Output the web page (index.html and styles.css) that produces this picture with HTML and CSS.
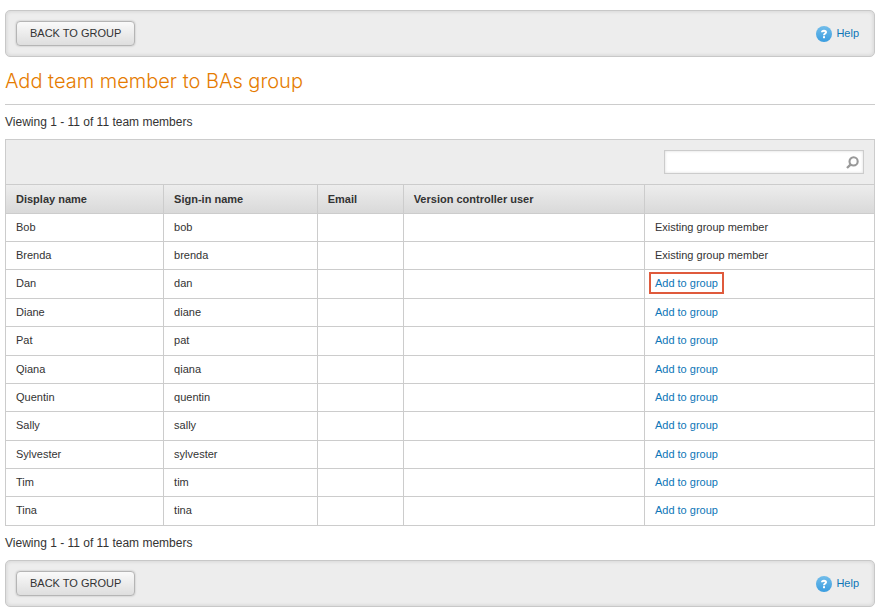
FILE: index.html
```html
<!DOCTYPE html>
<html lang="en">
<head>
<meta charset="utf-8">
<meta name="viewport" content="width=device-width, initial-scale=1">
<title>Add team member to BAs group</title>
<link rel="stylesheet" href="styles.css">
</head>
<body>
<svg class="defs" aria-hidden="true">
  <defs>
    <linearGradient id="help-fill" x1="0" y1="0" x2="0" y2="1">
      <stop offset="0" stop-color="#72bdea"/>
      <stop offset="1" stop-color="#3a9de0"/>
    </linearGradient>
    <symbol id="help-icon" viewBox="0 0 16 16">
      <circle cx="8" cy="8" r="8" fill="url(#help-fill)"/>
      <path d="M6 6.2C6 4.2 10 4.2 10 6.2C10 7.6 8 7.4 8 9.3" fill="none" stroke="#fff" stroke-width="2"/>
      <rect x="7" y="10.2" width="2" height="2" fill="#fff"/>
    </symbol>
  </defs>
</svg>

<nav class="toolbar" aria-label="Top actions">
  <button class="button" type="button">BACK TO GROUP</button>
  <a class="help" href="#help"><svg class="help-icon" aria-hidden="true"><use href="#help-icon"/></svg><span class="help-label">Help</span></a>
</nav>

<main>
  <h1 class="title">Add team member to BAs group</h1>
  <p class="summary">Viewing 1 - 11 of 11 team members</p>

  <section class="members">
    <form class="filter">
      <div class="search">
        <input class="search-input" type="text" aria-label="Search team members">
        <button class="search-button" type="button" aria-label="Search">
          <svg class="search-icon" viewBox="0 0 13 13" aria-hidden="true">
            <circle cx="7.6" cy="5.4" r="4.1" fill="none" stroke="#999" stroke-width="2.1"/>
            <path d="M4.8 8.4L1 12" stroke="#999" stroke-width="2.4"/>
          </svg>
        </button>
      </div>
    </form>
    <table class="table">
      <colgroup>
        <col class="col-name"><col class="col-signin"><col class="col-email"><col class="col-version"><col class="col-action">
      </colgroup>
      <thead>
        <tr><th scope="col">Display name</th><th scope="col">Sign-in name</th><th scope="col">Email</th><th scope="col">Version controller user</th><td></td></tr>
      </thead>
      <tbody>
        <tr><td>Bob</td><td>bob</td><td></td><td></td><td>Existing group member</td></tr>
        <tr><td>Brenda</td><td>brenda</td><td></td><td></td><td>Existing group member</td></tr>
        <tr><td>Dan</td><td>dan</td><td></td><td></td><td><a class="add highlighted" href="#dan">Add to group</a></td></tr>
        <tr><td>Diane</td><td>diane</td><td></td><td></td><td><a class="add" href="#diane">Add to group</a></td></tr>
        <tr><td>Pat</td><td>pat</td><td></td><td></td><td><a class="add" href="#pat">Add to group</a></td></tr>
        <tr><td>Qiana</td><td>qiana</td><td></td><td></td><td><a class="add" href="#qiana">Add to group</a></td></tr>
        <tr><td>Quentin</td><td>quentin</td><td></td><td></td><td><a class="add" href="#quentin">Add to group</a></td></tr>
        <tr><td>Sally</td><td>sally</td><td></td><td></td><td><a class="add" href="#sally">Add to group</a></td></tr>
        <tr><td>Sylvester</td><td>sylvester</td><td></td><td></td><td><a class="add" href="#sylvester">Add to group</a></td></tr>
        <tr><td>Tim</td><td>tim</td><td></td><td></td><td><a class="add" href="#tim">Add to group</a></td></tr>
        <tr><td>Tina</td><td>tina</td><td></td><td></td><td><a class="add" href="#tina">Add to group</a></td></tr>
      </tbody>
    </table>
  </section>

  <p class="summary">Viewing 1 - 11 of 11 team members</p>
</main>

<nav class="toolbar" aria-label="Bottom actions">
  <button class="button" type="button">BACK TO GROUP</button>
  <a class="help" href="#help"><svg class="help-icon" aria-hidden="true"><use href="#help-icon"/></svg><span class="help-label">Help</span></a>
</nav>
</body>
</html>
```
FILE: styles.css
```css
* {
  box-sizing: border-box;
}

body {
  margin: 0;
  padding: 10px 4px 6px 5px;
  background: #fff;
  color: #333;
  font-family: "Liberation Sans", Arial, sans-serif;
  font-size: 11px;
}

a {
  color: #0e76b7;
  text-decoration: none;
}

.defs {
  position: absolute;
  width: 0;
  height: 0;
}

.toolbar {
  display: flex;
  align-items: center;
  justify-content: space-between;
  padding: 10px 15px 10px 10px;
  border: 1px solid #c8c8c8;
  border-radius: 5px;
  background: #ededed;
  box-shadow: inset 0 0 4px rgba(0, 0, 0, 0.14);
}

.button {
  height: 25px;
  padding: 0 13px 2px;
  border: 1px solid #b5b5b5;
  border-radius: 4px;
  background: linear-gradient(#fafafa, #dedede);
  box-shadow: 0 0 2px rgba(0, 0, 0, 0.25);
  color: #333;
  font: inherit;
}

.help {
  display: flex;
  align-items: center;
  gap: 4px;
}

.help-label {
  padding-bottom: 2px;
}

.help-icon {
  width: 16px;
  height: 16px;
}

.title {
  margin: 0;
  padding: 10px 0 9px;
  border-bottom: 1px solid #ccc;
  color: #e57b00;
  font-family: Inter, "Liberation Sans", sans-serif;
  font-size: 20px;
  font-weight: 300;
  line-height: 28px;
}

.summary {
  margin: 0;
  padding: 9px 0;
  font-size: 12px;
  line-height: 16px;
}

.members {
  border: 1px solid #ccc;
}

.filter {
  display: flex;
  justify-content: flex-end;
  padding: 10px;
  background: #ededed;
}

.search {
  display: flex;
  align-items: center;
  width: 200px;
  height: 24px;
  padding-right: 4px;
  border: 1px solid #ccc;
  background: #fff;
  box-shadow: inset 0 0 3px rgba(0, 0, 0, 0.15);
}

.search-input {
  flex: 1;
  min-width: 0;
  height: 100%;
  padding: 0 5px;
  border: 0;
  background: none;
  font: inherit;
}

.search-button {
  display: flex;
  padding: 0;
  border: 0;
  background: none;
}

.search-icon {
  width: 13px;
  height: 13px;
}

.table {
  width: 100%;
  border-spacing: 0;
  table-layout: fixed;
}

.col-name {
  width: 18.1%;
}

.col-signin {
  width: 17.7%;
}

.col-email {
  width: 9.9%;
}

.col-version {
  width: 27.8%;
}

.table th,
.table td {
  padding: 0 10px;
  border-top: 1px solid #ccc;
  border-left: 1px solid #ccc;
  text-align: left;
}

.table tbody td {
  padding-bottom: 2px;
}

.table th:first-child,
.table td:first-child {
  border-left: 0;
}

.table thead tr {
  height: 29px;
}

.table thead th,
.table thead td {
  background: linear-gradient(#ededed, #d9d9d9);
}

.table tbody tr {
  height: 28px;
}

.table tbody tr:nth-child(3),
.table tbody tr:nth-child(3n + 5) {
  height: 29px;
}

.highlighted {
  margin: 0 -1px;
  padding: 0 1px;
  outline: 2px solid #df5a3c;
  outline-offset: 3px;
}
```
